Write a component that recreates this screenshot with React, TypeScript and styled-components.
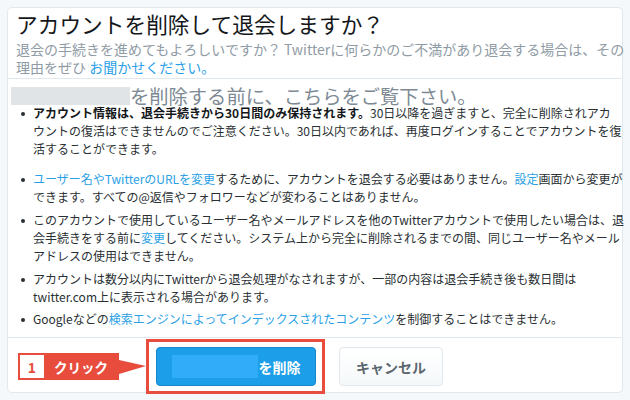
import styled, { createGlobalStyle } from "styled-components";

const GlobalStyle = createGlobalStyle`
  html, body {
    margin: 0;
    background: #f5f8fa;
  }

  body {
    font-family: "Noto Sans CJK JP", "Noto Sans", sans-serif;
    color: #292f33;
  }
`;

const Card = styled.section`
  box-sizing: border-box;
  display: flex;
  flex-direction: column;
  width: 616px;
  height: 386px;
  margin: 7px;

  border: 1px solid #e1e8ed;
  border-radius: 5px;

  background: #fff;
`;

const Header = styled.header`
  padding: 1px 8px 2px;
  border-bottom: 1px solid #e1e8ed;
`;

const Title = styled.h1`
  margin: 0;
  color: #14171a;
  font-size: 21.7px;
  font-weight: 400;
  line-height: 30px;
  white-space: nowrap;
`;

const Lead = styled.p`
  margin: 1px 0 0;
  color: #8f9ba5;
  font-size: 14px;
  line-height: 18px;
  white-space: nowrap;
`;

const Link = styled.a`
  color: #2b9fe6;
  text-decoration: none;
`;

const Body = styled.div`
  padding: 6px 8px 0 3px;
`;

const Heading = styled.h2`
  display: flex;
  align-items: center;
  height: 22px;
  margin: 0;

  color: #7d8a94;
  font-size: 19.3px;
  font-weight: 400;
  line-height: 22px;
  white-space: nowrap;
`;

const Masked = styled.span<{ $w: number; $h: number; $bg: string }>`
  display: inline-block;
  flex: none;
  width: ${({ $w }) => $w}px;
  height: ${({ $h }) => $h}px;
  background: ${({ $bg }) => $bg};
`;

const List = styled.ul`
  margin: -3px 0 0;
  padding: 0;
  list-style: none;
`;

const Item = styled.li<{ $gap: number }>`
  display: flex;
  margin-bottom: ${({ $gap }) => $gap}px;

  font-size: 12px;
  line-height: 18px;
  white-space: nowrap;
`;

const Dot = styled.span`
  flex: none;
  width: 4px;
  height: 4px;
  margin: 8px 8px 0 10px;
  border-radius: 50%;
  background: #292f33;
`;

const Strong = styled.b`
  color: #14171a;
  font-weight: 700;
`;

const Footer = styled.footer`
  display: flex;
  align-items: center;
  height: 55px;
  margin-top: auto;
  margin-bottom: -2px;
  padding: 1px 0 0 10px;

  border-top: 1px solid #e1e8ed;
`;

const Callout = styled.div`
  display: flex;
  align-items: center;
`;

const Tag = styled.div`
  box-sizing: border-box;
  display: flex;
  align-items: center;
  width: 101px;
  height: 27px;
  padding: 0 2px;

  background: #e74c3c;
  color: #fff;
  font-size: 13.5px;
  font-weight: 700;
`;

const Num = styled.span`
  display: flex;
  align-items: center;
  justify-content: center;
  width: 24px;
  height: 23px;
  margin-right: 10px;

  background: #fff;
  color: #e74c3c;
  font-size: 14px;
  font-weight: 700;
`;

const Highlight = styled.div`
  box-sizing: border-box;
  height: 55px;
  padding: 5px 6px 5px 7px;
  border: 3px solid #e74c3c;
`;

const Button = styled.button<{ $primary?: boolean }>`
  box-sizing: border-box;
  display: flex;
  align-items: center;
  justify-content: center;
  gap: 1px;
  width: ${({ $primary }) => ($primary ? 160 : 104)}px;
  height: 39px;
  padding: 0;

  border: 1px solid ${({ $primary }) => ($primary ? "#1686cc" : "#e1e8ed")};
  border-radius: 4px;

  background: ${({ $primary }) =>
    $primary ? "#1d9ee9" : "linear-gradient(#fff, #f5f8fa)"};
  color: ${({ $primary }) => ($primary ? "#fff" : "#5b6770")};
  font-family: inherit;
  font-size: 14px;
  font-weight: 700;
`;

const Cancel = styled(Button)`
  margin-left: 14px;
`;

export default function App() {
  return (
    <>
      <GlobalStyle />
      <Card>
        <Header>
          <Title>アカウントを削除して退会しますか？</Title>
          <Lead>
            退会の手続きを進めてもよろしいですか？ Twitterに何らかのご不満があり退会する場合は、その
            <br />
            理由をぜひ <Link href="#">お聞かせください。</Link>
          </Lead>
        </Header>

        <Body>
          <Heading>
            <Masked $w={119} $h={18} $bg="#e1e4e6" />
            を削除する前に、こちらをご覧下さい。
          </Heading>

          <List>
            <Item $gap={12}>
              <Dot />
              <span>
                <Strong>アカウント情報は、退会手続きから30日間のみ保持されます。</Strong>
                30日以降を過ぎますと、完全に削除されアカ
                <br />
                ウントの復活はできませんのでご注意ください。30日以内であれば、再度ログインすることでアカウントを復
                <br />
                活することができます。
              </span>
            </Item>
            <Item $gap={5}>
              <Dot />
              <span>
                <Link href="#">ユーザー名やTwitterのURLを変更</Link>
                するために、アカウントを退会する必要はありません。
                <Link href="#">設定</Link>画面から変更が
                <br />
                できます。すべての@返信やフォロワーなどが変わることはありません。
              </span>
            </Item>
            <Item $gap={5}>
              <Dot />
              <span>
                このアカウントで使用しているユーザー名やメールアドレスを他のTwitterアカウントで使用したい場合は、退
                <br />
                会手続きをする前に<Link href="#">変更</Link>
                してください。システム上から完全に削除されるまでの間、同じユーザー名やメール
                <br />
                アドレスの使用はできません。
              </span>
            </Item>
            <Item $gap={4}>
              <Dot />
              <span>
                アカウントは数分以内にTwitterから退会処理がなされますが、一部の内容は退会手続き後も数日間は
                <br />
                twitter.com上に表示される場合があります。
              </span>
            </Item>
            <Item $gap={0}>
              <Dot />
              <span>
                Googleなどの
                <Link href="#">検索エンジンによってインデックスされたコンテンツ</Link>
                を制御することはできません。
              </span>
            </Item>
          </List>
        </Body>

        <Footer>
          <Callout>
            <Tag>
              <Num>1</Num>
              クリック
            </Tag>
            <svg width="27" height="27" viewBox="0 0 27 27">
              <polygon points="0,7 27,13 0,21" fill="#e74c3c" />
            </svg>
          </Callout>
          <Highlight>
            <Button $primary>
              <Masked $w={86} $h={23} $bg="#30acf8" />
              を削除
            </Button>
          </Highlight>
          <Cancel>キャンセル</Cancel>
        </Footer>
      </Card>
    </>
  );
}
